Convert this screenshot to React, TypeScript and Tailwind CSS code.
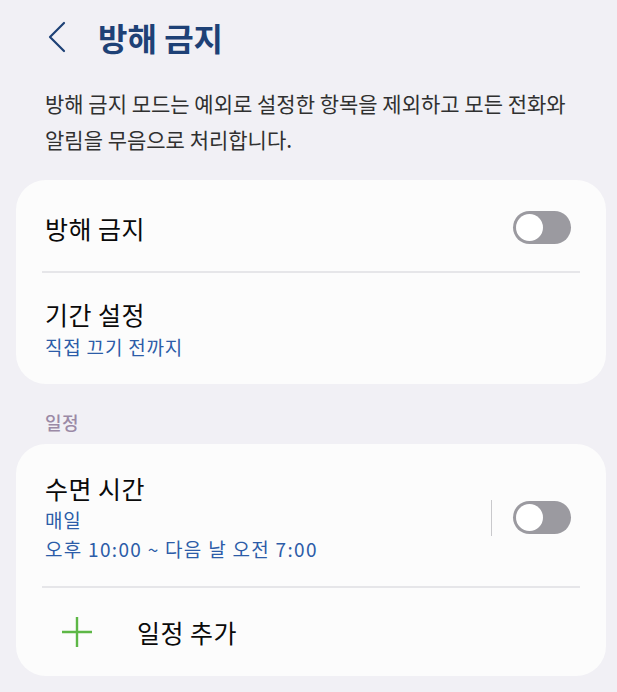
function Toggle() {
  return (
    <span className="relative inline-flex h-[33px] w-[58px] shrink-0 items-center rounded-full bg-[#9b9aa0]">
      <span className="absolute left-[3px] top-[3px] h-[27px] w-[27px] rounded-full bg-white" />
    </span>
  );
}

function ChevronLeft() {
  return (
    <svg width="20" height="32" viewBox="0 0 20 32" fill="none" aria-hidden="true">
      <path d="M17 2 L3 16 L17 30" stroke="#1e4176" strokeWidth={2.2} strokeLinecap="round" strokeLinejoin="round" />
    </svg>
  );
}

function PlusIcon() {
  return (
    <svg width="32" height="32" viewBox="0 0 32 32" fill="none" aria-hidden="true">
      <path d="M16 1 V31 M1 16 H31" stroke="#5db746" strokeWidth={2.4} />
    </svg>
  );
}

export default function App() {
  return (
    <div
      className="min-h-[692px] w-full bg-[#f1f0f5] text-[#0a0a0a]"
      style={{ fontFamily: '"Noto Sans CJK KR", "Noto Sans", sans-serif' }}
    >
      <header className="flex h-[74px] items-center pl-[47px]">
        <ChevronLeft />
        <h1 className="ml-[31px] text-[32px] font-bold leading-[40px] text-[#1e4176]">방해 금지</h1>
      </header>

      <p className="mt-[11px] break-keep pl-[45px] pr-[30px] text-[21px] leading-[36px] text-[#303030]">
        방해 금지 모드는 예외로 설정한 항목을 제외하고 모든 전화와 알림을 무음으로 처리합니다.
      </p>

      <section className="ml-[16px] mr-[11px] mt-[23px] rounded-[30px] bg-[#fcfcfc]">
        <div className="flex h-[91px] items-center justify-between pl-[29px] pr-[35px] pt-[4px]">
          <span className="text-[25px] leading-[30px] tracking-[0.5px]">방해 금지</span>
          <Toggle />
        </div>
        <div className="mx-[26px] h-[2px] bg-[#e6e6e9]" />
        <div className="h-[111px] pl-[29px] pt-[26px]">
          <div className="text-[25px] leading-[30px] tracking-[0.5px]">기간 설정</div>
          <div className="mt-[6px] text-[19px] leading-[24px] tracking-[0.8px] text-[#2c5ca8]">직접 끄기 전까지</div>
        </div>
      </section>

      <div className="mt-[26px] pl-[45px] text-[18px] font-medium leading-[24px] tracking-[0.5px] text-[#9b8aa6]">일정</div>

      <section className="ml-[16px] mr-[11px] mt-[10px] rounded-[30px] bg-[#fcfcfc]">
        <div className="flex items-center justify-between pb-[24px] pl-[29px] pr-[35px] pt-[29px]">
          <div>
            <div className="text-[25px] leading-[30px] tracking-[0.5px]">수면 시간</div>
            <div className="mt-[4px] text-[19px] leading-[26px] tracking-[0.8px] text-[#2c5ca8]">매일</div>
            <div className="mt-[3px] text-[19px] leading-[26px] tracking-[1.3px] text-[#2c5ca8]">오후 10:00 ~ 다음 날 오전 7:00</div>
          </div>
          <div className="flex items-center">
            <span className="mr-[21px] h-[36px] w-[1.5px] bg-[#c9c9cc]" />
            <Toggle />
          </div>
        </div>
        <div className="mx-[26px] h-[2px] bg-[#e6e6e9]" />
        <div className="flex h-[88px] items-center pl-[45px]">
          <PlusIcon />
          <span className="ml-[44px] text-[25px] leading-[30px] tracking-[0.5px]">일정 추가</span>
        </div>
      </section>
    </div>
  );
}
